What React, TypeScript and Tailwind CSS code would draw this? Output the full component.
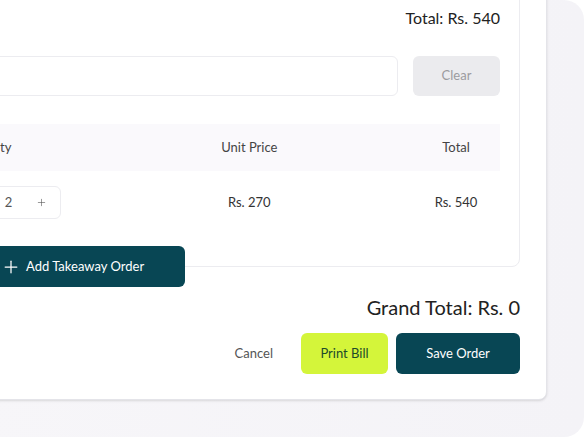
import { Plus, Minus } from 'lucide-react'

const font = { fontFamily: 'Lato, "Noto Sans", sans-serif' }

export default function App() {
  return (
    <div className="relative w-[584px] h-[438px] overflow-hidden bg-white" style={font}>
      {/* page behind the dialog */}
      <div className="-ml-5 h-[437px] w-[604px] rounded-[20px] bg-gradient-to-r from-[#f7f6f9] to-[#f4f3f7]" />

      {/* dialog */}
      <div className="absolute left-[-420px] top-[-41px] w-[967px] rounded-lg border border-[#e4e4e9] bg-white pt-5 pr-[26px] pb-[25px] pl-5 shadow-sm">
        <div className="rounded-lg border border-[#ececf0] pl-5 pr-[19px] pt-[26px] pb-[32px]">
          <div className="text-right text-[16px] leading-[22px] text-[#222]">Total: Rs. 540</div>

          <div className="mt-[27px] flex h-10 gap-[15px]">
            <input className="flex-1 rounded-md border border-[#ececf0] bg-white px-3 text-[13px] outline-none" />
            <button className="w-[87px] rounded-md bg-[#ebebee] text-[13px] text-[#9b9b9f]">Clear</button>
          </div>

          <div className="mt-[28px]">
            <div className="flex h-[47px] items-center bg-[#faf9fc] text-[13px] text-[#444]">
              <div className="w-[335px] pl-4">Item</div>
              <div className="w-[130px] pl-[33px]">Qty</div>
              <div className="w-[326px] text-center">Unit Price</div>
              <div className="w-[88px] text-center">Total</div>
            </div>
            <div className="flex h-[63px] items-center text-[13px] text-[#333]">
              <div className="w-[335px] pl-4">Chicken Fried Rice</div>
              <div className="w-[130px]">
                <div className="flex h-[33px] w-[104px] items-center justify-between rounded-md border border-[#ececf0] px-[13px] text-[#555]">
                  <Minus size={11} strokeWidth={1.3} />
                  <span className="text-[13px]">2</span>
                  <Plus size={11} strokeWidth={1.3} />
                </div>
              </div>
              <div className="w-[326px] text-center">Rs. 270</div>
              <div className="w-[88px] text-center">Rs. 540</div>
            </div>
          </div>
        </div>

        <button className="relative z-10 -mt-[21px] ml-[388px] flex h-[41px] w-[196px] items-center gap-[5px] rounded-md bg-[#084654] pl-3 text-[13px] text-white">
          <Plus size={20} strokeWidth={1.5} />
          Add Takeaway Order
        </button>

        <div className="mt-[6px] text-right text-[20px] leading-[28px] text-[#222]">Grand Total: Rs. 0</div>

        <div className="mt-[12px] flex h-[41px] items-stretch justify-end gap-2">
          <button className="px-5 text-[13px] text-[#555]">Cancel</button>
          <button className="w-[87px] rounded-md bg-[#d4f53a] text-[13px] text-[#1d4a2a]">Print Bill</button>
          <button className="w-[124px] rounded-md bg-[#084654] text-[13px] text-white">Save Order</button>
        </div>
      </div>
    </div>
  )
}
